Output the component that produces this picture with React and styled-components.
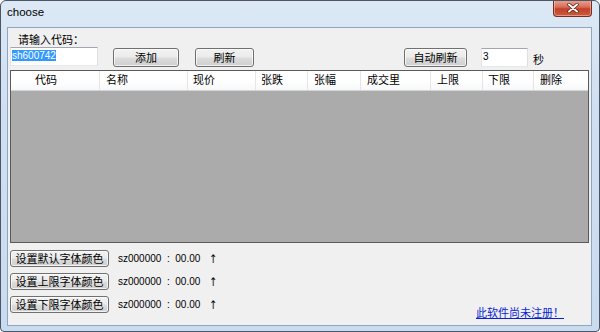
import React from 'react';
import styled, { createGlobalStyle } from 'styled-components';

const Global = createGlobalStyle`
	html, body {
		margin: 0;
		padding: 0;
		background: #ffffff;
	}
	body {
		font-family: "Liberation Sans", "Noto Sans CJK SC", sans-serif;
		font-size: 11px;
		color: #000;
	}
`;

const Window = styled.div`
	width: 600px;
	height: 332px;
	box-sizing: border-box;
	border: 1px solid #4b5563;
	border-radius: 6px 6px 4px 4px;
	background: linear-gradient(180deg, #dce8f5 0%, #d0e0f2 30%, #c9dbef 100%);
	display: flex;
	flex-direction: column;
	overflow: hidden;
`;

const TitleBar = styled.div`
	height: 26px;
	display: flex;
	align-items: flex-start;
	flex-shrink: 0;
`;

const Title = styled.div`
	font-family: "Liberation Sans", sans-serif;
	font-size: 11.5px;
	line-height: 12px;
	margin: 5px 0 0 6px;
	color: #000;
	flex: 1;
`;

const CloseButton = styled.div`
	width: 39px;
	height: 17px;
	margin-right: 7px;
	margin-top: -1px;
	box-sizing: border-box;
	border: 1px solid #7c2a1f;
	border-top: none;
	border-radius: 0 0 4px 4px;
	background: linear-gradient(180deg, #e9a799 0%, #d66c55 45%, #c2402a 55%, #cc5a3c 100%);
	box-shadow: inset 0 0 0 1px rgba(255, 210, 200, 0.5);
	display: flex;
	align-items: center;
	justify-content: center;
`;

const Client = styled.div`
	flex: 1;
	margin: 0 7px 5px 6px;
	border: 1px solid #8ea6c2;
	background: #f0f0f0;
	padding: 0 2px;
	display: flex;
	flex-direction: column;
	min-height: 0;
`;

const Label = styled.div`
	margin-top: 6px;
	padding-left: 8px;
	height: 13px;
	line-height: 13px;
`;

const Controls = styled.div`
	height: 20px;
	display: flex;
	align-items: flex-start;
	margin-bottom: 3px;
`;

const TextBox = styled.div`
	width: ${p => p.$w}px;
	height: 19px;
	box-sizing: border-box;
	border: 1px solid #abadb3;
	border-top-color: #a3a6ae;
	border-left-color: #e2e3ea;
	border-right-color: #dbdfe6;
	border-bottom-color: #e3e9ef;
	background: #fff;
	margin-top: ${p => p.$top || 0}px;
	margin-left: ${p => p.$left || 0}px;
	padding: 1px 1px;
	font-size: 10px;
	line-height: 13px;
`;

const Selected = styled.span`
	background: #3399ff;
	color: #fff;
`;

const Button = styled.div`
	width: ${p => p.$w}px;
	height: ${p => p.$h || 19}px;
	box-sizing: border-box;
	margin-left: ${p => p.$left || 0}px;
	margin-top: ${p => p.$top || 0}px;
	border: 1px solid #707070;
	border-radius: 3px;
	background: linear-gradient(180deg, #f2f2f2 0%, #ebebeb 49%, #dddddd 51%, #cfcfcf 100%);
	box-shadow: inset 0 0 0 1px rgba(255, 255, 255, 0.7);
	display: flex;
	align-items: center;
	justify-content: center;
	line-height: 12px;
	flex-shrink: 0;
`;

const Unit = styled.span`
	margin-left: 5px;
	margin-top: 7px;
	line-height: 12px;
`;

const Table = styled.div`
	flex: 1;
	border: 1px solid #5a5a5a;
	background: #ababab;
	display: flex;
	flex-direction: column;
	min-height: 0;
`;

const Header = styled.div`
	height: 19px;
	display: flex;
	background: linear-gradient(180deg, #ffffff 0%, #ffffff 50%, #f7f8fa 100%);
	border-bottom: 1px solid #d5d5d5;
`;

const HeadCell = styled.div`
	width: ${p => p.$w}px;
	box-sizing: border-box;
	flex-shrink: 0;
	padding-left: ${p => p.$pad}px;
	line-height: 19px;
	border-right: 1px solid ${p => (p.$blank ? 'transparent' : '#e5e5e5')};
	${p => p.$fill && 'flex: 1; border-right: none;'}
`;

const Bottom = styled.div`
	display: flex;
	padding: 7px 0 6px;
`;

const Rows = styled.div`
	display: flex;
	flex-direction: column;
	gap: 6px;
	padding-bottom: 6px;
`;

const Row = styled.div`
	display: flex;
	align-items: center;
	height: 17px;
`;

const Status = styled.span`
	margin-left: 9px;
	font-size: 10px;
	white-space: pre;
	line-height: 12px;
	display: flex;
	align-items: center;
`;

const Arrow = styled.span`
	font-family: "DejaVu Sans", sans-serif;
	font-size: 12px;
	line-height: 12px;
	margin-left: 8px;
	transform: scaleX(0.8);
`;

const Link = styled.a`
	align-self: flex-end;
	margin-left: auto;
	margin-right: 25px;
	color: #0a1fd8;
	text-decoration: underline;
	line-height: 12px;
	cursor: pointer;
`;

const columns = [
	{ t: '', w: 17, pad: 0, blank: true },
	{ t: '代码', w: 72, pad: 7 },
	{ t: '名称', w: 88, pad: 6 },
	{ t: '现价', w: 68, pad: 5 },
	{ t: '张跌', w: 52, pad: 5 },
	{ t: '张幅', w: 53, pad: 6 },
	{ t: '成交里', w: 70, pad: 6 },
	{ t: '上限', w: 52, pad: 6 },
	{ t: '下限', w: 51, pad: 5 },
	{ t: '删除', w: 0, pad: 6, fill: true }
];

const colorButtons = ['设置默认字体颜色', '设置上限字体颜色', '设置下限字体颜色'];

function CloseIcon() {
	return (
		<svg width="12" height="10" viewBox="0 0 12 10">
			<path d="M2 1.5 L10 8.5 M10 1.5 L2 8.5" stroke="#5a1a10" strokeWidth="3.4" strokeLinecap="round" />
			<path d="M2 1.5 L10 8.5 M10 1.5 L2 8.5" stroke="#ffffff" strokeWidth="2" strokeLinecap="round" />
		</svg>
	);
}

export default function App() {
	return (
		<>
			<Global />
			<Window>
				<TitleBar>
					<Title>choose</Title>
					<CloseButton>
						<CloseIcon />
					</CloseButton>
				</TitleBar>
				<Client>
					<Label>请输入代码：</Label>
					<Controls>
						<TextBox $w={88}>
							<Selected>sh600742</Selected>
						</TextBox>
						<Button $w={66} $left={15} $top={1}>添加</Button>
						<Button $w={59} $left={16} $top={1}>刷新</Button>
						<Button $w={63} $left={150} $top={1}>自动刷新</Button>
						<TextBox $w={47} $left={14} $top={1}>3</TextBox>
						<Unit>秒</Unit>
					</Controls>
					<Table>
						<Header>
							{columns.map((c, i) => (
								<HeadCell key={i} $w={c.w} $pad={c.pad} $blank={c.blank} $fill={c.fill}>
									{c.t}
								</HeadCell>
							))}
						</Header>
					</Table>
					<Bottom>
						<Rows>
							{colorButtons.map(b => (
								<Row key={b}>
									<Button $w={99} $h={17}>{b}</Button>
									<Status>
										{'sz000000  :  00.00'}
										<Arrow>↑</Arrow>
									</Status>
								</Row>
							))}
						</Rows>
						<Link>此软件尚未注册！</Link>
					</Bottom>
				</Client>
			</Window>
		</>
	);
}
